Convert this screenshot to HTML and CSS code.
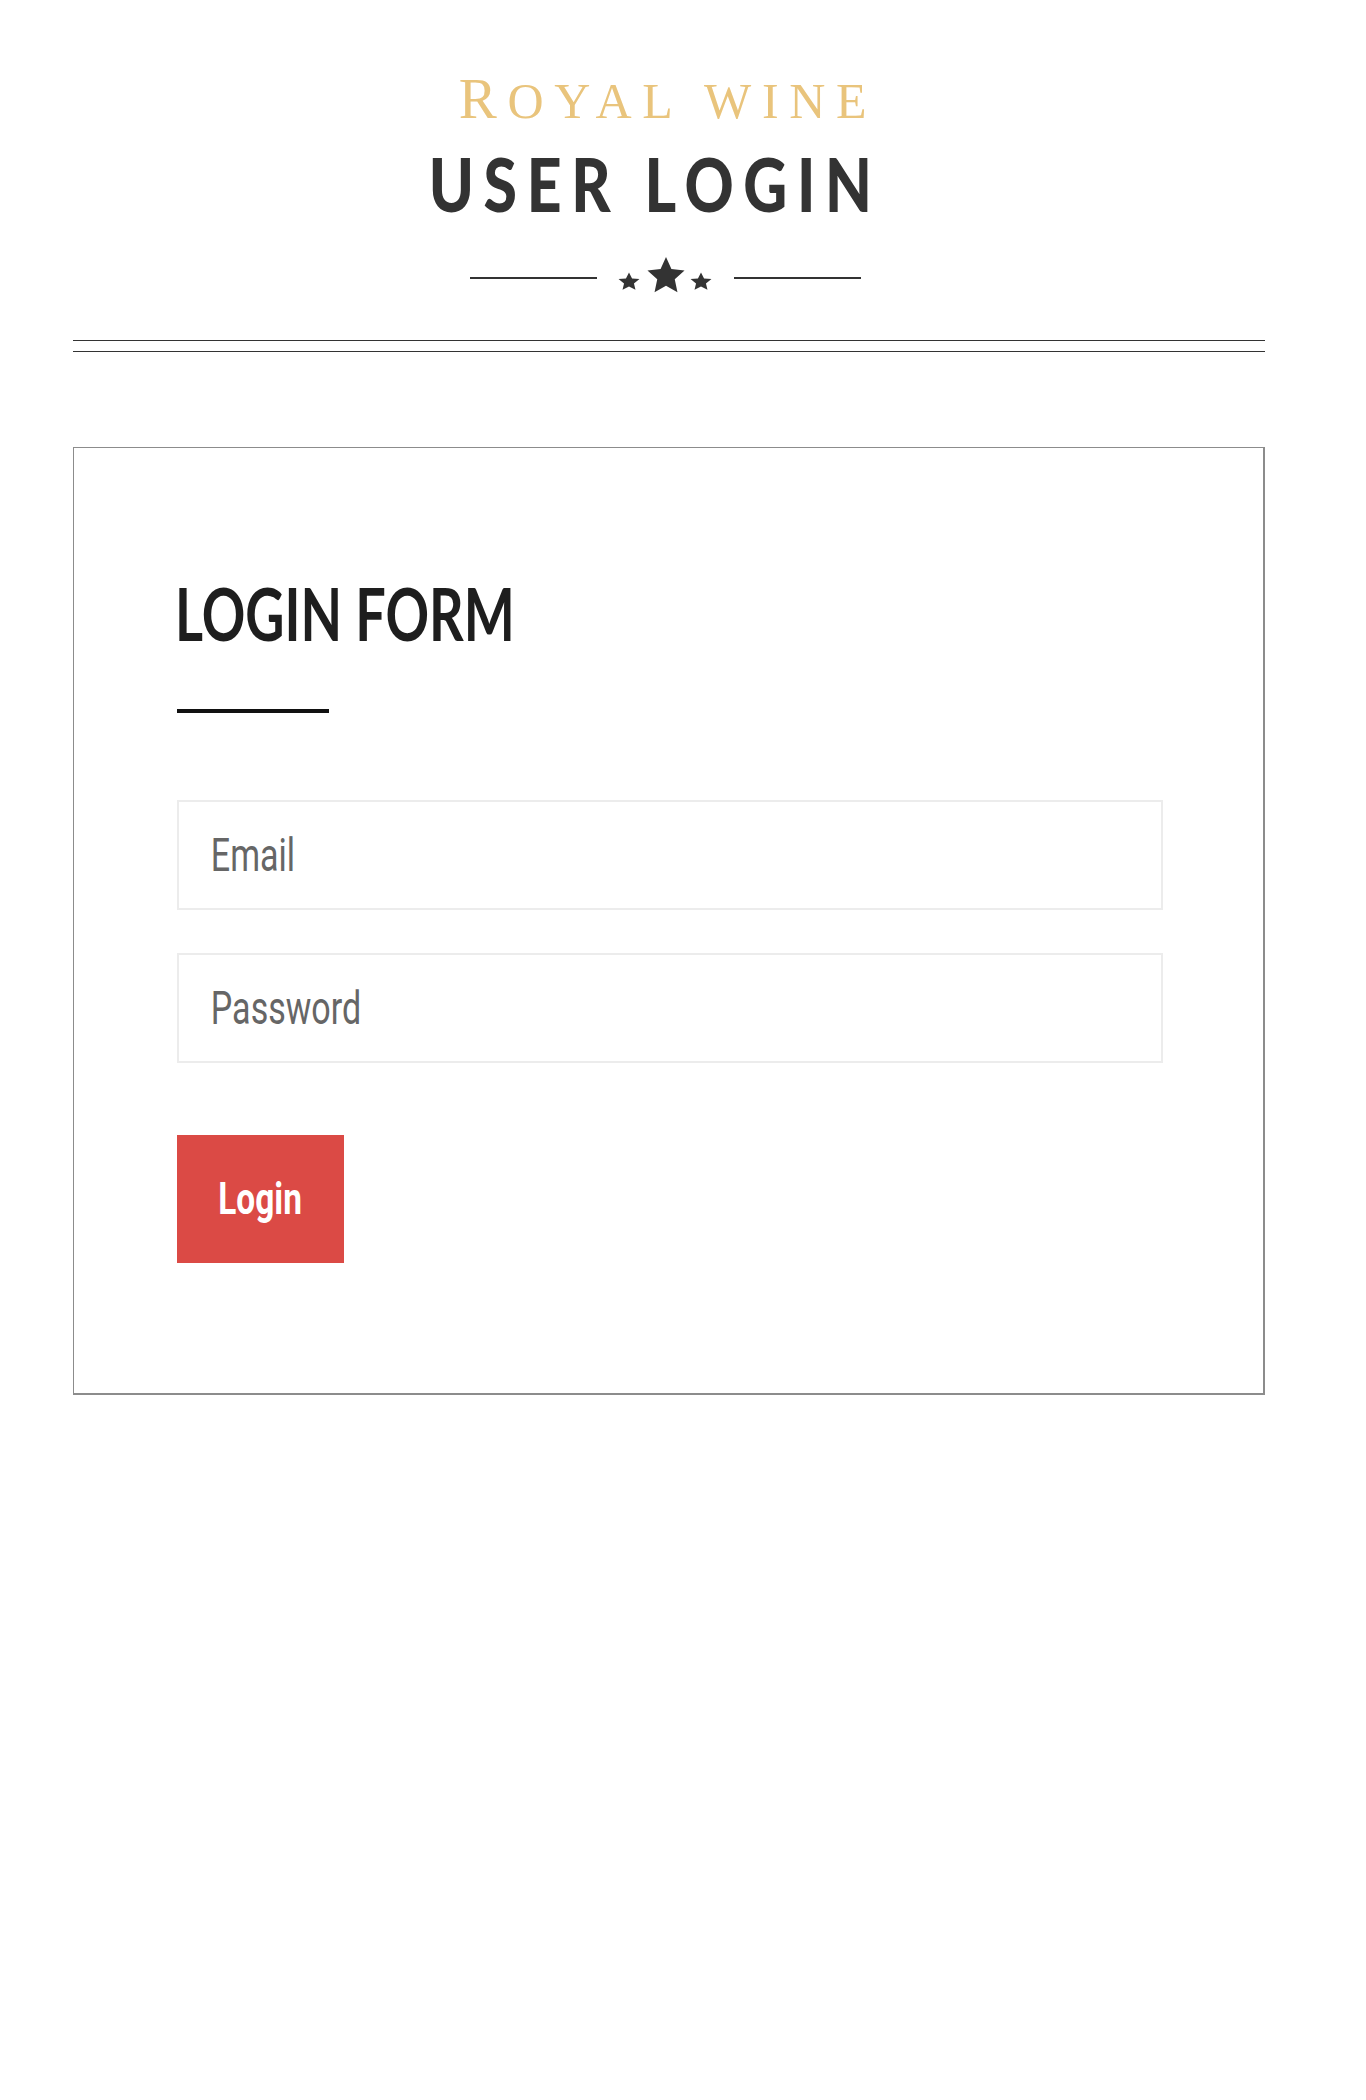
FILE: index.html
```html
<!DOCTYPE html>
<html lang="en">
<head>
<meta charset="utf-8">
<title>User Login - Royal Wine</title>
<link rel="stylesheet" href="styles.css">
</head>
<body>
<div class="page">
  <header class="page-head">
    <p class="brand"><span class="brand-initial">R</span>OYAL WINE</p>
    <h1 class="page-title"><span class="title-text">USER LOGIN</span></h1>
    <div class="divider">
      <span class="divider-line"></span>
      <svg class="stars" viewBox="0 0 94 38" aria-hidden="true">
        <polygon transform="translate(11 25) scale(1 0.86)" points="0,-11 3.06,-4.21 10.46,-3.4 4.95,1.61 6.47,8.9 0,5.2 -6.47,8.9 -4.95,1.61 -10.46,-3.4 -3.06,-4.21"/>
        <polygon transform="translate(48 19.5)" points="0,-19.5 5.41,-7.44 18.55,-6.03 8.75,2.84 11.46,15.78 0,9.2 -11.46,15.78 -8.75,2.84 -18.55,-6.03 -5.41,-7.44"/>
        <polygon transform="translate(83 25) scale(1 0.86)" points="0,-11 3.06,-4.21 10.46,-3.4 4.95,1.61 6.47,8.9 0,5.2 -6.47,8.9 -4.95,1.61 -10.46,-3.4 -3.06,-4.21"/>
      </svg>
      <span class="divider-line"></span>
    </div>
  </header>

  <div class="double-rule"></div>

  <section class="login-box">
    <h2 class="form-title"><span class="squeeze">LOGIN FORM</span></h2>
    <div class="title-bar"></div>
    <form class="login-form" action="#" onsubmit="return false;">
      <div class="field">
        <input class="field-input" type="email" name="email" placeholder="Email" aria-label="Email">
      </div>
      <div class="field">
        <input class="field-input" type="password" name="password" placeholder="Password" aria-label="Password">
      </div>
      <button class="btn" type="submit"><span class="btn-label">Login</span></button>
    </form>
  </section>
</div>
</body>
</html>
```

FILE: styles.css
```css
* {
  box-sizing: border-box;
}

body {
  margin: 0;
  background: #fff;
  font-family: "Lato", "Liberation Sans", sans-serif;
  color: #333;
}

.page {
  width: 1192px;
  margin-left: 73px;
  padding-top: 69px;
  padding-bottom: 40px;
}

.page-head {
  display: flex;
  flex-direction: column;
  align-items: center;
  padding-right: 8px;
}

.brand {
  margin: 0;
  padding-left: 6px;
  font-family: "Liberation Serif", serif;
  font-size: 50px;
  line-height: 60px;
  letter-spacing: 10.7px;
  color: #e9c47c;
}

.brand-initial {
  font-size: 57px;
}

.page-title {
  margin: 16px 0 0;
  padding-right: 20px;
  font-family: "Lato", sans-serif;
  font-weight: 900;
  font-size: 74px;
  line-height: 74px;
  letter-spacing: 11.8px;
  color: #333;
}

.title-text {
  display: inline-block;
  transform: scaleX(0.82);
  transform-origin: center;
}

.divider {
  display: flex;
  align-items: center;
  margin-top: 36px;
}

.divider-line {
  width: 127px;
  height: 2px;
  margin-top: 4px;
  background: #333;
}

.stars {
  display: block;
  width: 94px;
  height: 38px;
  margin: 0 22px 0 21px;
  fill: #333;
}

.double-rule {
  margin-top: 45px;
  height: 12px;
  border-top: 1px solid #333;
  border-bottom: 1px solid #333;
}

.login-box {
  margin-top: 95px;
  border: 1px solid #8c8c8c;
  border-right-width: 2px;
  border-bottom-width: 2px;
  padding: 129px 100px 130px 103px;
}

.form-title {
  margin: 0 0 0 -2px;
  font-family: "Lato", sans-serif;
  font-weight: 700;
  font-size: 72px;
  line-height: 72px;
  color: #1e1e1e;
}

.squeeze {
  display: inline-block;
  transform: scaleX(0.75);
  transform-origin: left center;
}

.title-bar {
  width: 152px;
  height: 4px;
  margin-top: 60px;
  background: #111;
}

.login-form {
  margin-top: 87px;
}

.field {
  width: 986px;
  height: 110px;
  border: 2px solid #ececec;
  overflow: hidden;
}

.field + .field {
  margin-top: 43px;
}

.field-input {
  display: block;
  width: 135.2%;
  height: 100%;
  margin: 0;
  padding: 0 0 0 43px;
  border: 0;
  outline: none;
  background: transparent;
  font-family: "Roboto", sans-serif;
  font-size: 46px;
  color: #333;
  transform: scaleX(0.74);
  transform-origin: left center;
}

.field-input::placeholder {
  color: #666;
  opacity: 1;
}

.btn {
  display: block;
  margin-top: 72px;
  width: 167px;
  height: 128px;
  padding: 0;
  border: 0;
  background: #db4a45;
  color: #fff;
  font-family: "Roboto", sans-serif;
  font-weight: 700;
  font-size: 44px;
  cursor: pointer;
}

.btn-label {
  display: inline-block;
  transform: scaleX(0.76);
}
```
